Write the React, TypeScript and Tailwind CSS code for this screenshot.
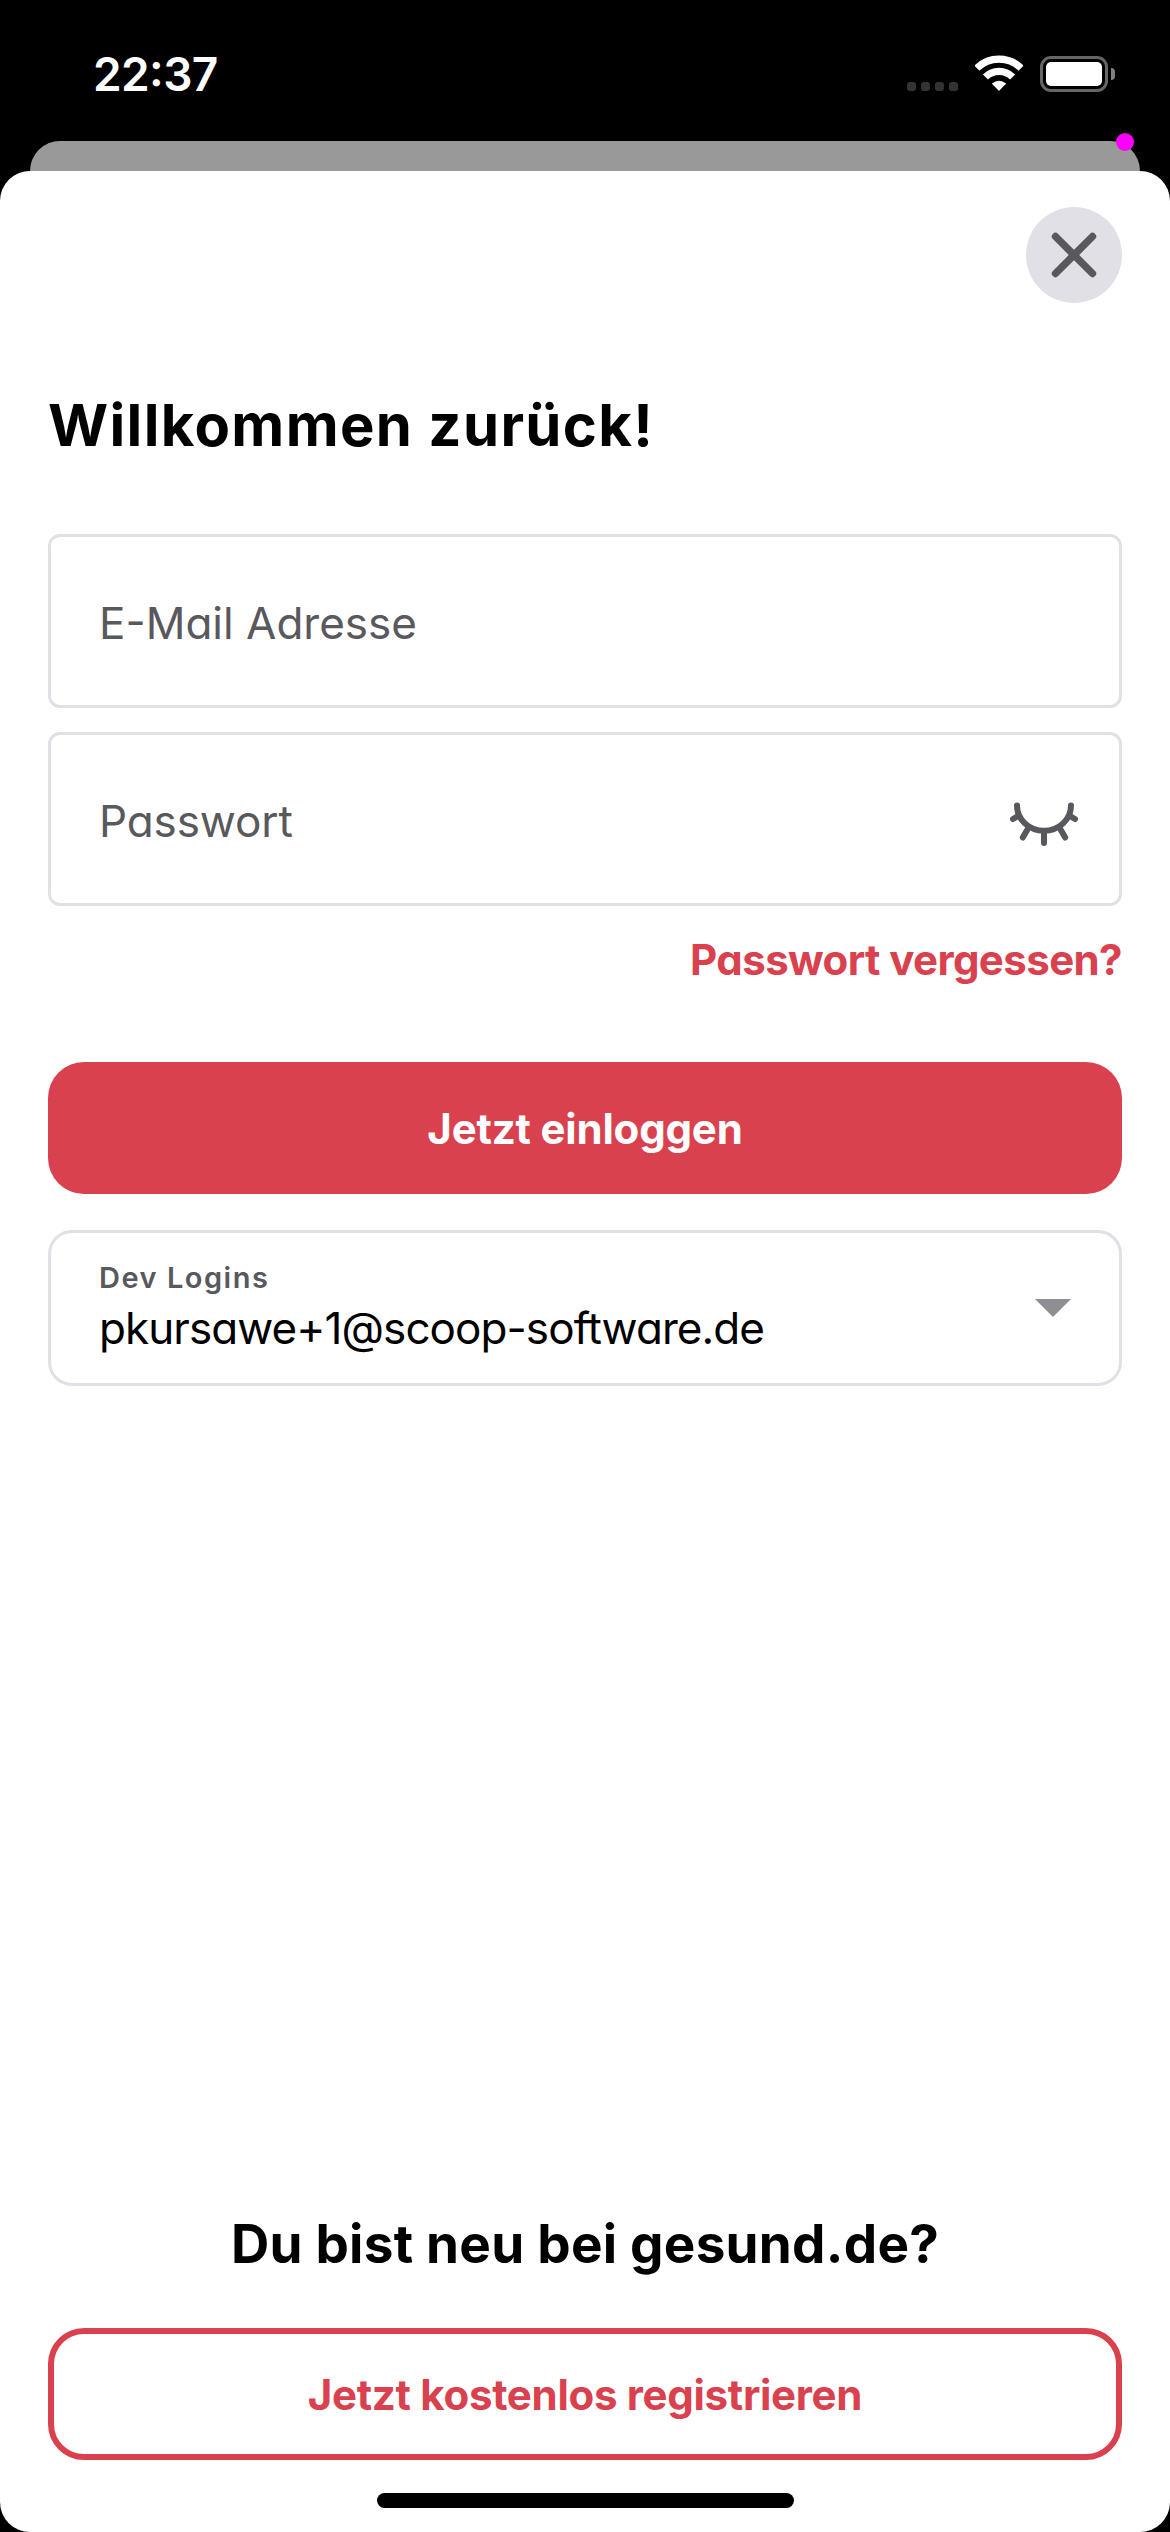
import { X } from "lucide-react";

function WifiIcon() {
  return (
    <svg className="h-[36px] w-[48px]" viewBox="0 0 48 36" fill="none" stroke="#fff">
      <path d="M1.9 13.2A31.5 31.5 0 0 1 46.1 13.2" strokeWidth="7.2" />
      <path d="M10.4 22A19.4 19.4 0 0 1 37.6 22" strokeWidth="7.2" />
      <path d="M24 35.2L17.6 28.7Q24 23.8 30.4 28.7Z" fill="#fff" strokeWidth="1.2" strokeLinejoin="round" />
    </svg>
  );
}

function ClosedEyeIcon() {
  return (
    <svg className="mt-[6px] h-[44px] w-[68px]" viewBox="0 0 68 44" fill="none" stroke="#58585d" strokeWidth="6" strokeLinecap="round">
      <path d="M7 3.5C7 17.5 19 28.7 34 28.7S61 17.5 61 3.5" />
      <path d="M34 29V41M18 26.5L12.8 35.5M50 26.5L55.2 35.5M8.5 13.7L3 17M59.5 13.7L65 17" />
    </svg>
  );
}

function StatusBar() {
  return (
    <header className="flex h-[141px] items-start justify-between pl-[93px] pr-[55px]">
      <time className="mt-[46px] text-[46px] leading-[56px] font-semibold tracking-[-0.6px] text-white [font-feature-settings:'case']">
        22:37
      </time>
      <div className="mt-[55px] flex items-start">
        <div className="mt-[27px] mr-[17px] flex gap-[5px]">
          <i className="size-[9px] rounded-[3px] bg-[#333]" />
          <i className="size-[9px] rounded-[3px] bg-[#333]" />
          <i className="size-[9px] rounded-[3px] bg-[#333]" />
          <i className="size-[9px] rounded-[3px] bg-[#333]" />
        </div>
        <WifiIcon />
        <div className="mt-px ml-[17px] flex items-center gap-[3px]">
          <div className="h-[36px] w-[68px] rounded-[11px] border-[3px] border-[#666] p-[3px]">
            <div className="h-full rounded-[5px] bg-white" />
          </div>
          <div className="h-[12px] w-[4px] rounded-r-full bg-[#808080]" />
        </div>
      </div>
    </header>
  );
}

export default function App() {
  return (
    <div className="flex h-[2532px] w-[1170px] flex-col bg-black font-['Inter',sans-serif] text-black [font-feature-settings:'cv11']">
      <StatusBar />
      <div className="relative mx-[30px] h-[30px] rounded-t-[30px] bg-[#999]">
        <span className="absolute -top-[8px] right-[6px] size-[18px] rounded-full bg-[#f0f]" />
      </div>

      <main className="flex flex-1 flex-col rounded-[30px] bg-white px-[48px] pt-[36px]">
        <button className="flex size-[96px] items-center justify-center self-end rounded-full bg-[#e1e0e6]" aria-label="Schließen">
          <X className="size-[74px] text-[#58585d]" strokeWidth={2.4} />
        </button>

        <h1 className="mt-[86px] text-[58px] leading-[72px] font-bold tracking-[1.35px]">Willkommen zurück!</h1>

        <div className="mt-[73px] flex h-[174px] items-center rounded-[12px] border-[3px] border-[#e1e0e6] pt-[4px] pl-[48px] text-[44px] text-[#58585d]">
          E-Mail Adresse
        </div>
        <div className="mt-[24px] flex h-[174px] items-center justify-between rounded-[12px] border-[3px] border-[#e1e0e6] pt-[4px] pr-[41px] pl-[48px] text-[44px] tracking-[-0.1px] text-[#58585d]">
          Passwort
          <ClosedEyeIcon />
        </div>

        <a className="mt-[30px] self-end text-[42px] leading-[48px] font-[650] tracking-[-0.6px] text-[#da414e]">Passwort vergessen?</a>

        <button className="mt-[78px] h-[132px] rounded-[36px] bg-[#da414e] text-[42px] font-[650] tracking-[-0.2px] text-white">
          Jetzt einloggen
        </button>

        <div className="mt-[36px] flex h-[156px] justify-between rounded-[24px] border-[3px] border-[#e1e0e6] pt-[27px] pr-[48px] pl-[48px]">
          <div>
            <div className="text-[29px] leading-[36px] font-semibold tracking-[1.5px] text-[#58585d]">Dev Logins</div>
            <div className="mt-[8px] text-[44px] leading-[48px] tracking-[-0.92px]">pkursawe+1@scoop-software.de</div>
          </div>
          <svg className="mt-[39px] h-[18px] w-[36px]" viewBox="0 0 36 18" fill="#8e8e93">
            <path d="M0 0H36L18 18Z" />
          </svg>
        </div>

        <h2 className="mt-auto text-center text-[53px] leading-[64px] font-bold tracking-[0.25px]">Du bist neu bei gesund.de?</h2>
        <button className="mt-[52px] h-[132px] shrink-0 rounded-[36px] border-[6px] border-[#da414e] text-[42px] font-[650] tracking-[-0.3px] text-[#da414e]">
          Jetzt kostenlos registrieren
        </button>
        <div className="mt-[33px] mb-[24px] h-[15px] w-[417px] shrink-0 self-center rounded-full bg-black" />
      </main>
    </div>
  );
}
